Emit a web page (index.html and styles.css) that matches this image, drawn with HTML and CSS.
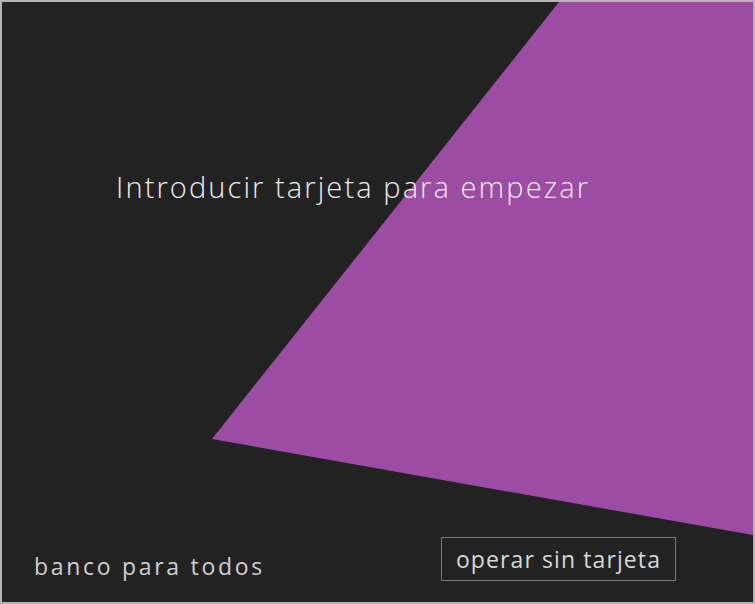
FILE: index.html
```html
<!DOCTYPE html>
<html lang="es">
<head>
  <meta charset="UTF-8" />
  <title>Banco para todos</title>
  <link rel="stylesheet" href="styles.css">
</head>
<body>
  <div class="screen">
    <svg class="bg" viewBox="0 0 751 600" preserveAspectRatio="none">
      <polygon points="557,0 751,0 751,533 210,437" fill="#9c4ca3" />
    </svg>
    <h1 class="prompt">Introducir tarjeta para empezar</h1>
    <div class="footer">
      <span class="brand">banco para todos</span>
      <button class="nocard">operar sin tarjeta</button>
    </div>
  </div>
</body>
</html>
```

FILE: styles.css
```css
body {
  margin: 0;
  font-family: "Open Sans", "Liberation Sans", sans-serif;
  background: #222;
}
.screen {
  position: relative;
  width: 755px;
  height: 604px;
  box-sizing: border-box;
  border: 2px solid #b4b4b4;
  background: #222222;
  display: flex;
  flex-direction: column;
  justify-content: space-between;
  overflow: hidden;
}
.bg {
  position: absolute;
  top: 0;
  left: 0;
  width: 100%;
  height: 100%;
}
.prompt {
  position: relative;
  margin: 165px 0 0 114px;
  font-size: 29px;
  font-weight: 300;
  letter-spacing: 2.1px;
  color: #ececec;
}
.footer {
  position: relative;
  display: flex;
  justify-content: space-between;
  align-items: center;
  padding: 0 77px 20px 32px;
}
.brand {
  font-size: 23px;
  font-weight: 400;
  letter-spacing: 2.7px;
  color: #cfcfcf;
  margin-top: 14px;
}
.nocard {
  width: 235px;
  height: 44px;
  background: #222;
  border: 1px solid #7a7a7a;
  color: #d8d8d8;
  font-family: inherit;
  font-size: 23px;
  font-weight: 400;
  letter-spacing: 1.1px;
  padding: 0;
}
```
